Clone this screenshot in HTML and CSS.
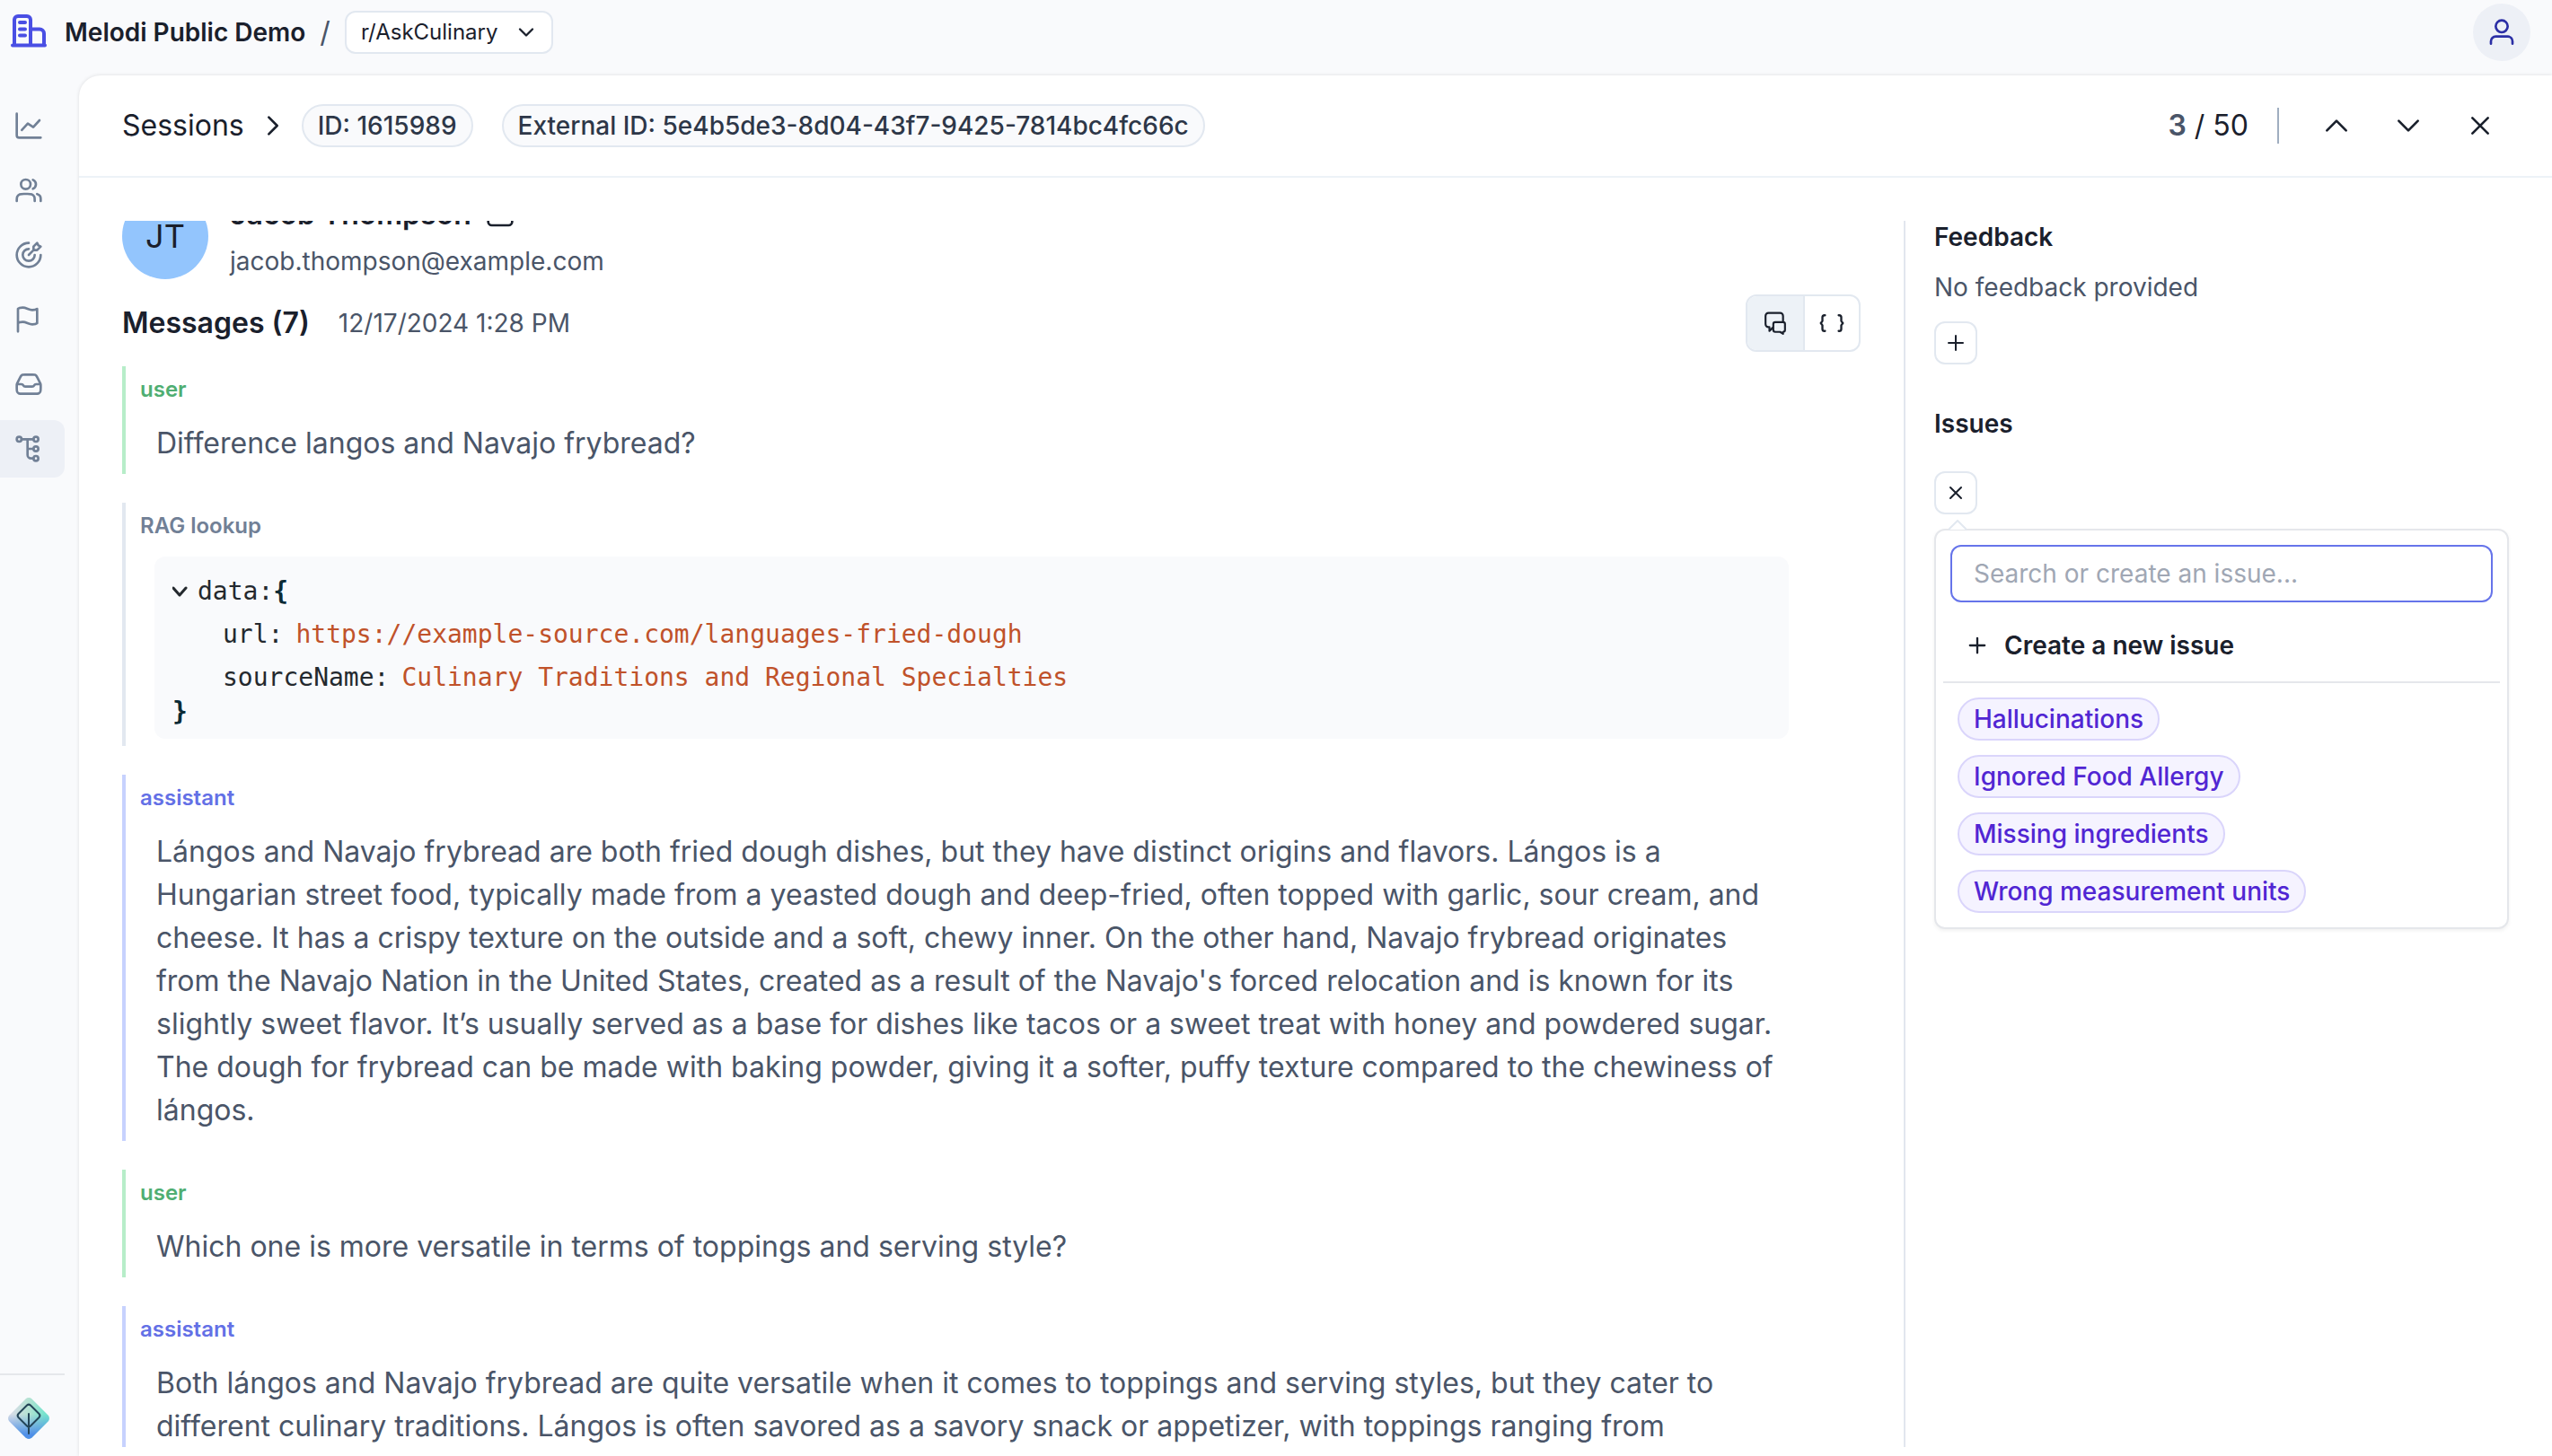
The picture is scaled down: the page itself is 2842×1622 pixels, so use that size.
FILE: index.html
```html
<!DOCTYPE html>
<html lang="en">
<head>
<meta charset="utf-8">
<meta name="viewport" content="width=device-width, initial-scale=1">
<title>Session 1615989 – Melodi Public Demo</title>
<link rel="stylesheet" href="styles.css">
</head>
<body>
<div class="app">
  <header class="topbar">
    <a class="brand" href="#">
      <svg class="brand-icon" viewBox="0 0 40 40" aria-hidden="true"><path d="M4 34V6a4 4 0 0 1 4-4h10a4 4 0 0 1 4 4v28M22 16.500h10a5 5 0 0 1 5 5V34M2 34.500h36M10 9h6M10 16.500h6M10 23.500h6"/></svg>
      <span>Melodi Public Demo</span>
    </a>
    <span class="slash">/</span>
    <div class="project">
      <select aria-label="Project"><option>r/AskCulinary</option></select>
      <svg class="icon project-chevron" viewBox="0 0 24 24" aria-hidden="true"><path d="M6 9l6 6 6-6"/></svg>
    </div>
    <button class="account" type="button" aria-label="Account">
      <svg class="icon" viewBox="0 0 24 24" aria-hidden="true"><circle cx="12" cy="7" r="5"/><path d="M3 21.500v-2a4 4 0 0 1 4-4h10a4 4 0 0 1 4 4v2"/></svg>
    </button>
  </header>

  <nav class="sidebar" aria-label="Main">
    <a class="nav-item" href="#" aria-label="Analytics"><svg class="icon" viewBox="0 0 24 24"><path d="M2 2v18a2 2 0 0 0 2 2h18M6.200 15.600l5-5.400 4.600 3L21 7.500"/></svg></a>
    <a class="nav-item" href="#" aria-label="Users"><svg class="icon" viewBox="0 0 24 24"><path d="M22 21V19C22 17.1362 20.7252 15.5701 19 15.126M15.5 3.29076C16.9659 3.88415 18 5.32131 18 7C18 8.67869 16.9659 10.1159 15.5 10.7092M17 21C17 19.1362 17 18.2044 16.6955 17.4693C16.2895 16.4892 15.5108 15.7105 14.5307 15.3045C13.7956 15 12.8638 15 11 15H8C6.13623 15 5.20435 15 4.46927 15.3045C3.48915 15.7105 2.71046 16.4892 2.30448 17.4693C2 18.2044 2 19.1362 2 21M13.5 7C13.5 9.20914 11.7091 11 9.5 11C7.29086 11 5.5 9.20914 5.5 7C5.5 4.79086 7.29086 3 9.5 3C11.7091 3 13.5 4.79086 13.5 7Z"/></svg></a>
    <a class="nav-item" href="#" aria-label="Goals"><svg class="icon" viewBox="0 0 24 24"><path d="M16 8V5L19 2L20 4L22 5L19 8H16ZM16 8L12 12M22 12C22 17.5228 17.5228 22 12 22C6.47715 22 2 17.5228 2 12C2 6.47715 6.47715 2 12 2M17 12C17 14.7614 14.7614 17 12 17C9.23858 17 7 14.7614 7 12C7 9.23858 9.23858 7 12 7"/></svg></a>
    <a class="nav-item" href="#" aria-label="Issues"><svg class="icon" viewBox="0 0 24 24"><path d="M3 15C3 15 4 14 7 14C10 14 12 16 15 16C18 16 19 15 19 15V3C19 3 18 4 15 4C12 4 10 2 7 2C4 2 3 3 3 3L3 22"/></svg></a>
    <a class="nav-item" href="#" aria-label="Inbox"><svg class="icon" viewBox="0 0 24 24"><path d="M2.5 12H5.88197C6.56717 12 7.19357 12.3871 7.5 13C7.80643 13.6129 8.43283 14 9.11803 14H14.882C15.5672 14 16.1936 13.6129 16.5 13C16.8064 12.3871 17.4328 12 18.118 12H21.5M8.96656 4H15.0334C16.1103 4 16.6487 4 17.1241 4.16396C17.5445 4.30896 17.9274 4.5456 18.2451 4.85675C18.6043 5.2086 18.8451 5.6902 19.3267 6.65337L21.4932 10.9865C21.6822 11.3645 21.7767 11.5535 21.8434 11.7515C21.9026 11.9275 21.9453 12.1085 21.971 12.2923C22 12.4992 22 12.7105 22 13.1331V15.2C22 16.8802 22 17.7202 21.673 18.362C21.3854 18.9265 20.9265 19.3854 20.362 19.673C19.7202 20 18.8802 20 17.2 20H6.8C5.11984 20 4.27976 20 3.63803 19.673C3.07354 19.3854 2.6146 18.9265 2.32698 18.362C2 17.7202 2 16.8802 2 15.2V13.1331C2 12.7105 2 12.4992 2.02897 12.2923C2.05471 12.1085 2.09744 11.9275 2.15662 11.7515C2.22326 11.5535 2.31776 11.3645 2.50675 10.9865L4.67331 6.65337C5.15489 5.69021 5.39569 5.20862 5.75491 4.85677C6.07263 4.5456 6.45549 4.30896 6.87589 4.16396C7.35125 4 7.88969 4 8.96656 4Z"/></svg></a>
    <a class="nav-item nav-item-active" href="#" aria-label="Sessions" aria-current="page"><svg class="icon" viewBox="0 0 24 24"><circle cx="4" cy="4" r="2"/><circle cx="18" cy="4" r="2"/><circle cx="18" cy="12" r="2"/><circle cx="18" cy="20" r="2"/><path d="M6 4h10M11 4v13a3 3 0 0 0 3 3h2M11 12h5"/></svg></a>
    <div class="sidebar-foot">
      <svg class="logo" viewBox="0 0 48 48" role="img" aria-label="Melodi">
        <defs>
          <linearGradient id="lg-side" x1="0" y1="0" x2="1" y2="0"><stop offset="0.1" stop-color="#d5dce6"/><stop offset="0.5" stop-color="#b4e2d2"/><stop offset="0.9" stop-color="#74e3cd"/></linearGradient>
          <linearGradient id="lg-low" x1="0" y1="0" x2="0" y2="1"><stop offset="0.4" stop-color="#4f8fe8" stop-opacity="0"/><stop offset="0.9" stop-color="#4f8fe8"/></linearGradient>
        </defs>
        <path fill="url(#lg-side)" d="M20.500 2.500a5 5 0 0 1 7 0l18 18a5 5 0 0 1 0 7l-18 18a5 5 0 0 1-7 0l-18-18a5 5 0 0 1 0-7z"/>
        <path fill="url(#lg-low)" d="M20.500 2.500a5 5 0 0 1 7 0l18 18a5 5 0 0 1 0 7l-18 18a5 5 0 0 1-7 0l-18-18a5 5 0 0 1 0-7z"/>
        <path class="logo-mark" d="M22 9.500a3 3 0 0 1 4 0l9.500 9.500a3 3 0 0 1 0 4L26 32.500a3 3 0 0 1-4 0L12.500 23a3 3 0 0 1 0-4zM24 19v22"/>
      </svg>
    </div>
  </nav>

  <main class="panel">
    <div class="panel-head">
      <a class="crumb" href="#">Sessions</a>
      <svg class="icon crumb-chevron" viewBox="0 0 24 24" aria-hidden="true"><path d="M8.500 5l7 7-7 7"/></svg>
      <span class="tag tag-gap">ID: 1615989</span>
      <span class="tag">External ID: 5e4b5de3-8d04-43f7-9425-7814bc4fc66c</span>
      <div class="pager">
        <span class="count"><b>3</b> / 50</span>
        <span class="rule"></span>
        <button type="button" class="ghost" aria-label="Previous"><svg class="icon" viewBox="0 0 24 24"><path d="M4 16l8-8 8 8"/></svg></button>
        <button type="button" class="ghost" aria-label="Next"><svg class="icon" viewBox="0 0 24 24"><path d="M4 8l8 8 8-8"/></svg></button>
        <button type="button" class="ghost" aria-label="Close"><svg class="icon" viewBox="0 0 24 24"><path d="M5.500 5.500l13 13M18.500 5.500l-13 13"/></svg></button>
      </div>
    </div>

    <div class="panel-body">
      <section class="transcript">
        <div class="profile">
          <div class="avatar">JT</div>
          <div class="profile-text">
            <div class="profile-name">Jacob Thompson
              <svg class="icon" viewBox="0 0 24 24" aria-hidden="true"><path d="M11 4H6a4 4 0 0 0-4 4v10a3 3 0 0 0 3 3h14a3 3 0 0 0 3-3v-5M9 15v-4l9-9 4 4-9 9z"/></svg>
            </div>
            <div class="profile-mail">jacob.thompson@example.com</div>
          </div>
        </div>

        <div class="messages-head">
          <h2>Messages (7)</h2>
          <time>12/17/2024 1:28 PM</time>
          <div class="toggle">
            <button type="button" class="toggle-on" aria-label="Chat view" aria-pressed="true"><svg class="icon toggle-chat" viewBox="0 0 24 24"><path d="M9.500 16.500 6 20v-4H5a3 3 0 0 1-3-3V4.500a3 3 0 0 1 3-3h12a3 3 0 0 1 3 3V11M12 11h8a2 2 0 0 1 2 2v6a2 2 0 0 1-2 2v2l-3-2h-5a2 2 0 0 1-2-2v-6a2 2 0 0 1 2-2z"/></svg></button>
            <button type="button" class="toggle-off" aria-label="JSON view" aria-pressed="false"><svg class="icon" viewBox="0 0 24 24"><path d="M5.500 4.500H5a2 2 0 0 0-2 2v3.500l-1.500 2L3 14v3.500a2 2 0 0 0 2 2h.5M18.500 4.500h.5a2 2 0 0 1 2 2v3.500l1.500 2-1.500 2v3.500a2 2 0 0 1-2 2h-.5"/></svg></button>
          </div>
        </div>

        <div class="messages">
          <article class="message message-user">
            <h3>user</h3>
            <p>Difference langos and Navajo frybread?</p>
          </article>
          <article class="message message-tool">
            <h3>RAG lookup</h3>
            <div class="code">
              <div class="code-line"><svg class="icon code-chevron" viewBox="0 0 20 20" aria-hidden="true"><path d="M1 6l7 8 7-8"/></svg><span>data:<b>{</b></span></div>
              <div class="code-line code-nested">url:<span class="code-value">https://example-source.com/languages-fried-dough</span></div>
              <div class="code-line code-nested">sourceName:<span class="code-value">Culinary Traditions and Regional Specialties</span></div>
              <div class="code-end"><b>}</b></div>
            </div>
          </article>
          <article class="message message-assistant">
            <h3>assistant</h3>
            <p>Lángos and Navajo frybread are both fried dough dishes, but they have distinct origins and flavors. Lángos is a Hungarian street food, typically made from a yeasted dough and deep-fried, often topped with garlic, sour cream, and cheese. It has a crispy texture on the outside and a soft, chewy inner. On the other hand, Navajo frybread originates from the Navajo Nation in the United States, created as a result of the Navajo's forced relocation and is known for its slightly sweet flavor. It’s usually served as a base for dishes like tacos or a sweet treat with honey and powdered sugar. The dough for frybread can be made with baking powder, giving it a softer, puffy texture compared to the chewiness of lángos.</p>
          </article>
          <article class="message message-user">
            <h3>user</h3>
            <p>Which one is more versatile in terms of toppings and serving style?</p>
          </article>
          <article class="message message-assistant">
            <h3>assistant</h3>
            <p>Both lángos and Navajo frybread are quite versatile when it comes to toppings and serving styles, but they cater to different culinary traditions. Lángos is often savored as a savory snack or appetizer, with toppings ranging from</p>
          </article>
        </div>
      </section>

      <aside class="details">
        <section class="detail-block">
          <h2>Feedback</h2>
          <p>No feedback provided</p>
          <button type="button" class="square" aria-label="Add feedback"><svg class="icon" viewBox="0 0 24 24"><path d="M12 4v16M4 12h16"/></svg></button>
        </section>
        <section class="detail-block detail-issues">
          <h2>Issues</h2>
          <button type="button" class="square" aria-label="Close issue menu" aria-expanded="true"><svg class="icon" viewBox="0 0 24 24"><path d="M6 6l12 12M18 6L6 18"/></svg></button>
          <div class="popover">
            <svg class="popover-arrow" viewBox="0 0 20 12" aria-hidden="true"><path d="M0 11L10 1l10 10"/></svg>
            <input type="text" aria-label="Search or create an issue" placeholder="Search or create an issue...">
            <button type="button" class="create"><svg class="icon" viewBox="0 0 24 24" aria-hidden="true"><path d="M12 5v14M5 12h14"/></svg>Create a new issue</button>
            <div class="choices">
              <button type="button" class="issue">Hallucinations</button>
              <button type="button" class="issue">Ignored Food Allergy</button>
              <button type="button" class="issue">Missing ingredients</button>
              <button type="button" class="issue">Wrong measurement units</button>
            </div>
          </div>
        </section>
      </aside>
    </div>
  </main>
</div>
</body>
</html>
```

FILE: styles.css
```css
:root {
  --ink: #1a202c;
  --body: #4a5568;
  --muted: #718096;
  --line: #e2e8f0;
  --soft: #edf2f7;
  --page: #f9fafc;
}

* { box-sizing: border-box; }

body {
  margin: 0;
  background: var(--page);
  color: var(--ink);
  font: 400 28px/40px Inter, "Liberation Sans", sans-serif;
}

h2, h3, p { margin: 0; }
a { color: inherit; text-decoration: none; }
button, input, select { font: inherit; color: inherit; }
button { display: flex; align-items: center; padding: 0; border: 0; background: none; cursor: pointer; }

.icon {
  display: block;
  flex: none;
  width: 32px;
  height: 32px;
  fill: none;
  stroke: currentColor;
  stroke-width: 2;
  stroke-linecap: round;
  stroke-linejoin: round;
}

.app {
  display: grid;
  grid-template: 84px minmax(0, 1fr) / 88px minmax(0, 1fr);
  height: 100vh;
}

/* Top bar */
.topbar {
  grid-column: 1 / -1;
  display: flex;
  align-items: center;
  height: 72px;
  padding: 0 24px 0 12px;
}
.brand { display: flex; align-items: center; gap: 20px; font-weight: 600; }
.brand-icon {
  width: 40px;
  height: 40px;
  fill: none;
  stroke: #4a4fe4;
  stroke-width: 4;
  stroke-linecap: round;
  stroke-linejoin: round;
}
.slash { margin: 0 16px; color: var(--body); font-size: 32px; }
.project { display: grid; align-items: center; width: 232px; }
.project > * { grid-area: 1 / 1; }
.project select {
  appearance: none;
  width: 100%;
  height: 48px;
  padding: 0 16px;
  border: 2px solid var(--line);
  border-radius: 12px;
  background: #fff;
  font-size: 24px;
}
.project-chevron { justify-self: end; width: 28px; height: 28px; margin-right: 16px; pointer-events: none; }
.account {
  justify-content: center;
  width: 64px;
  height: 64px;
  margin-left: auto;
  border-radius: 50%;
  background: #edf0f6;
  color: #2b2fa5;
}

/* Side navigation */
.sidebar {
  display: flex;
  flex-direction: column;
  align-items: flex-start;
  gap: 8px;
  padding: 24px 16px 0 0;
  color: var(--muted);
}
.nav-item {
  display: flex;
  align-items: center;
  width: 100%;
  height: 64px;
  padding-left: 16px;
  border-radius: 0 12px 12px 0;
}
.nav-item-active { background: #edf0f6; }
.sidebar-foot {
  width: 100%;
  margin-top: auto;
  padding: 24px 0 18px 8px;
  border-top: 2px solid #e5e7eb;
}
.logo { display: block; width: 48px; height: 48px; }
.logo-mark { fill: none; stroke: #234457; stroke-width: 2; stroke-linecap: round; }

/* Session panel */
.panel {
  display: flex;
  flex-direction: column;
  min-height: 0;
  padding-bottom: 10px;
  border-radius: 24px 0 0 0;
  background: #fff;
  box-shadow: 0 0 4px rgba(0, 0, 0, .12);
}
.panel-head {
  display: flex;
  flex: none;
  align-items: center;
  height: 114px;
  padding: 0 56px 0 48px;
  border-bottom: 2px solid var(--soft);
}
.crumb { font-size: 32px; }
.crumb-chevron { margin: 0 16px; }
.tag {
  height: 48px;
  padding: 0 16px;
  border: 2px solid var(--line);
  border-radius: 24px;
  background: var(--page);
  color: #2d3748;
  font-weight: 500;
  line-height: 44px;
}
.tag-gap { margin-right: 32px; }
.pager { display: flex; align-items: center; gap: 32px; margin-left: auto; }
.count { font-size: 32px; }
.count b { color: var(--body); font-weight: 600; }
.rule { width: 2px; height: 40px; margin-right: 8px; background: #a0aec0; }
.ghost { justify-content: center; width: 48px; height: 48px; }

.panel-body {
  display: grid;
  flex: 1;
  grid-template-columns: minmax(0, 1fr) 722px;
  min-height: 0;
  padding-top: 48px;
}

/* Transcript, scrolled a little so the profile is cut by the top edge */
.transcript { overflow: hidden; padding: 0 48px; }
.profile { display: flex; gap: 24px; margin-top: -31px; }
.avatar {
  display: flex;
  flex: none;
  align-items: center;
  justify-content: center;
  width: 96px;
  height: 96px;
  border-radius: 50%;
  background: #93c5fd;
  font-size: 36px;
}
.profile-name { display: flex; align-items: center; gap: 16px; height: 48px; font-size: 32px; font-weight: 600; }
.profile-mail { height: 56px; color: var(--body); line-height: 56px; }

.messages-head { display: flex; align-items: center; gap: 32px; height: 64px; margin-top: 9px; }
.messages-head h2 { font-size: 32px; font-weight: 600; }
.messages-head time { color: var(--body); }
.toggle { display: flex; margin-left: auto; overflow: hidden; border: 2px solid var(--line); border-radius: 12px; }
.toggle button { justify-content: center; height: 60px; }
.toggle .icon { width: 28px; height: 28px; }
.toggle .toggle-chat { width: 26px; height: 26px; }
.toggle .toggle-on { width: 64px; background: var(--soft); border-right: 2px solid var(--line); }
.toggle .toggle-off { width: 60px; }

.messages { display: grid; gap: 32px; margin-top: 16px; }
.message { padding: 8px 80px 8px 16px; border-left: 4px solid; }
.message h3 { font-size: 24px; font-weight: 600; line-height: 36px; }
.message p { margin: 16px 0 0 18px; padding: 2px 0; color: var(--body); font-size: 32px; line-height: 48px; }
.message-user { border-color: #b7edc9; }
.message-user h3 { color: #4fae72; }
.message-tool { border-color: var(--line); }
.message-tool h3 { color: var(--muted); }
.message-assistant { border-color: #c7d2fe; }
.message-assistant h3 { color: #6370e6; }

.code {
  margin: 16px 0 0 16px;
  padding: 15px 20px 16px;
  border-radius: 12px;
  background: var(--page);
  color: #24292e;
  font: 400 28px/48px "DejaVu Sans Mono", monospace;
}
.code b { color: #0b2b36; }
.code-line { display: flex; align-items: center; }
.code-chevron { width: 20px; height: 20px; margin-right: 8px; stroke-width: 3; }
.code-nested { gap: 14px; padding-left: 56px; }
.code-value { color: #c0522a; }
.code-end { line-height: 28px; }

/* Details column */
.details { padding: 0 48px 0 32px; border-left: 2px solid #e2e6ee; }
.detail-block h2 { font-size: 28px; font-weight: 600; line-height: 36px; }
.detail-block p { margin: 18px 0; color: var(--body); }
.square { justify-content: center; width: 48px; height: 48px; border: 2px solid var(--line); border-radius: 12px; }
.square .icon { width: 24px; height: 24px; }
.detail-issues { margin-top: 48px; }
.detail-issues .square { margin-top: 35px; }

.popover {
  position: relative;
  margin-top: 16px;
  padding: 16px 8px;
  border: 2px solid #e5e7eb;
  border-radius: 12px;
  background: #fff;
  box-shadow: 0 2px 4px rgba(0, 0, 0, .06);
}
.popover-arrow { position: absolute; top: -12px; left: 14px; width: 20px; height: 12px; fill: #fff; stroke: var(--line); stroke-width: 2; }
.popover input {
  display: block;
  width: calc(100% - 16px);
  height: 64px;
  margin: 0 8px;
  padding: 0 24px;
  border: 2px solid #6674ea;
  border-radius: 12px;
  outline: 0;
  background: #fff;
}
.popover input::placeholder { color: #a0a7b4; opacity: 1; }
.create { gap: 16px; width: 100%; height: 90px; padding: 8px 0 0 24px; border-bottom: 2px solid #e5e7eb; font-weight: 600; }
.create .icon { width: 28px; height: 28px; }
.choices { display: flex; flex-direction: column; align-items: flex-start; gap: 16px; padding: 16px 16px 0; }
.issue {
  height: 48px;
  padding: 0 16px;
  border: 2px solid #dad5fb;
  border-radius: 24px;
  background: #f5f3ff;
  color: #5126d3;
  font-weight: 500;
}
```
